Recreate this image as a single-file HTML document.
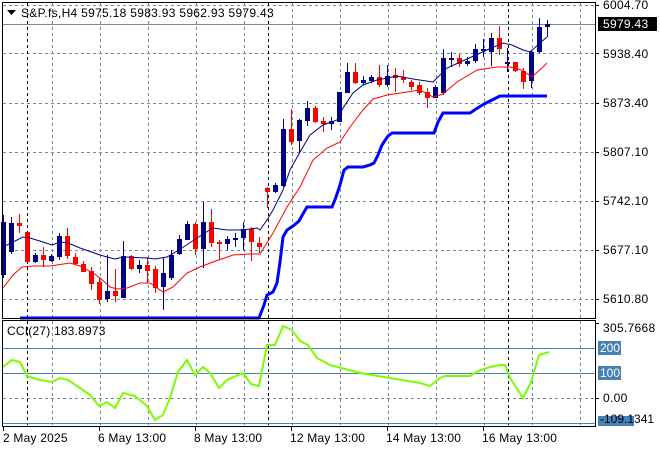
<!DOCTYPE html>
<html><head><meta charset="utf-8"><style>
html,body{margin:0;padding:0;background:#fff;}
svg{display:block;font-family:"Liberation Sans","DejaVu Sans",sans-serif;font-size:12px;}
</style></head><body>
<svg id="s" width="660" height="450" viewBox="0 0 660 450" xmlns="http://www.w3.org/2000/svg">
<rect width="660" height="450" fill="#fff"/>
<g stroke="#778899" stroke-width="1" stroke-dasharray="3,3" fill="none" shape-rendering="crispEdges">
<path d="M3 5.5H595M3 53.5H595M3 103.5H595M3 152.5H595M3 201.5H595M3 250.5H595M3 299.5H595"/>
<path d="M52.5 3V318M100.5 3V318M148.5 3V318M196.5 3V318M244.5 3V318M292.5 3V318M340.5 3V318M388.5 3V318M436.5 3V318M484.5 3V318M532.5 3V318M580.5 3V318"/>
<path d="M52.5 321V425M100.5 321V425M148.5 321V425M196.5 321V425M244.5 321V425M292.5 321V425M340.5 321V425M388.5 321V425M436.5 321V425M484.5 321V425M532.5 321V425M580.5 321V425"/>
<path d="M3 398.5H595"/>
</g>
<g stroke="#000" stroke-width="1" stroke-dasharray="3,3" fill="none" shape-rendering="crispEdges">
<path d="M27.5 3V318M268.5 3V318M508.5 3V318M27.5 321V425M268.5 321V425M508.5 321V425"/>
</g>
<g stroke="#4682b4" stroke-width="1" shape-rendering="crispEdges">
<path d="M3 348.5H595M3 373.5H595M3 423.5H595"/>
</g>
<path d="M3 24.5H595" stroke="#778899" stroke-width="1" shape-rendering="crispEdges"/>
<g id="candles" shape-rendering="crispEdges"></g>
<polyline fill="none" stroke="#000080" stroke-width="1" points="3,247 23,237 30,238 43,242 52,245 60,242 68,243 80,248 100,255 107,257 115,259 123,257 147,258 155,259 167,257 182,248 197,238 213,228 227,230 243,230 257,228 260,230 267,220 273,210 283,190 290,170 300,152 310,135 323,125 337,120 343,108 353,93 363,85 377,80 397,76 413,79 433,82 447,68 467,59 487,50 503,43 512,45 523,50 530,52 540,43 547,37"/>
<polyline fill="none" stroke="#ff0000" stroke-width="1" points="3,288 13,275 22,267 33,266 50,266 70,263 80,266 93,273 100,278 110,287 117,289 127,288 140,283 150,283 163,292 173,287 187,273 200,267 213,262 233,255 250,254 260,254 273,233 287,207 300,187 313,160 327,148 340,142 350,127 363,110 373,99 387,95 407,92 420,90 433,97 443,94 457,82 477,70 497,67 510,67 522,70 532,77 543,67 547,63"/>
<polyline fill="none" stroke="#0000ff" stroke-width="3" points="20,318 259,318 264,305 267,295 273,292 277,283 280,262 283,237 287,230 293,226 299,221 304,212 307,207 332,207 336,197 340,185 344,170 348,167 363,167 370,165 374,163 378,155 382,145 388,136 392,133 434,133 438,122 443,113 470,113 476,109 484,104 492,100 500,96 547,96"/>
<polyline fill="none" stroke="#7cfc00" stroke-width="2" points="3,367 12,360 20,362 27,376 40,380 52,382 60,378 68,380 80,388 90,395 99,406 107,402 115,408 123,393 135,396 147,406 155,420 163,415 170,398 178,372 187,360 195,375 203,367 210,373 219,388 227,380 243,373 251,384 259,386 267,345 275,345 283,326 292,330 300,341 308,345 317,358 330,365 360,373 390,378 420,383 430,386 440,378 445,376 470,376 478,371 490,367 500,365 505,365 510,378 523,398 531,382 539,355 549,352"/>
<g fill="none" stroke="#000" stroke-width="1" shape-rendering="crispEdges">
<rect x="2.5" y="2.5" width="593" height="316"/>
<rect x="2.5" y="320.5" width="593" height="106"/>
<path d="M595 5.5H599M595 53.5H599M595 103.5H599M595 152.5H599M595 201.5H599M595 250.5H599M595 299.5H599M595 323.5H599M595 398.5H599"/>
<path d="M3.5 427V431M99.5 427V431M195.5 427V431M291.5 427V431M387.5 427V431M483.5 427V431"/>
</g>
<path d="M7 10h9l-4.5 5z" fill="#000"/>
<text x="21" y="17" fill="#000" letter-spacing="0.3">S&amp;P.fs,H4  5975.18 5983.93 5962.93 5979.43</text>
<text x="7" y="335" fill="#000" letter-spacing="0.2">CCI(27) 183.8973</text>
<g fill="#000" letter-spacing="0.3">
<text x="603" y="9">6004.70</text>
<text x="603" y="58">5938.40</text>
<text x="603" y="107">5873.40</text>
<text x="603" y="156">5807.10</text>
<text x="603" y="205">5742.10</text>
<text x="603" y="254">5677.10</text>
<text x="603" y="303">5610.80</text>
<text x="603" y="332">305.7668</text>
<text x="603" y="402">0.00</text>
</g>
<rect x="598" y="17" width="59" height="14" fill="#000"/>
<text x="603" y="28" fill="#fff" letter-spacing="0.3">5979.43</text>
<rect x="598" y="341" width="23" height="14" fill="#4682b4"/>
<text x="600" y="352" fill="#fff">200</text>
<rect x="598" y="366" width="23" height="14" fill="#4682b4"/>
<text x="600" y="377" fill="#fff">100</text>
<rect x="598" y="416" width="36" height="10" fill="#4682b4"/>
<text x="600" y="423" fill="#000">-109.1341</text>
<g fill="#000" letter-spacing="0.2">
<text x="3" y="442">2 May 2025</text>
<text x="98" y="442">6 May 13:00</text>
<text x="194" y="442">8 May 13:00</text>
<text x="290" y="442">12 May 13:00</text>
<text x="386" y="442">14 May 13:00</text>
<text x="482" y="442">16 May 13:00</text>
</g>
</svg>
<script>
var d=[
['b',222,275,215,278],['b',223,252,217,254],['r',223,226,214,233],['r',232,262,232,262],['b',255,262,253,263],['r',255,260,247,267],['b',256,261,254,262],['b',236,257,233,260],['r',236,256,228,259],['r',257,264,253,265],['r',264,272,261,272],['r',271,284,267,290],['r',282,300,278,304],['b',291,299,255,302],['r',291,296,269,302],['b',256,298,241,298],['r',256,269,255,270],['b',265,269,260,273],['r',265,271,257,283],['r',269,288,266,293],['b',273,287,257,310],['b',255,278,250,280],['b',239,254,235,255],['b',224,240,221,240],['r',224,249,222,255],['b',222,249,202,268],['r',222,243,209,247],['r',242,244,240,260],['b',239,244,236,250],['b',238,239,233,247],['b',229,238,222,250],['r',229,242,227,261],['r',243,247,237,253],
['r',188,192,187,208],['b',185,192,183,193],['b',129,186,119,187],['r',129,142,109,145],['b',120,141,119,153],['b',108,121,101,126],['r',108,122,106,123],['r',121,124,117,132],['b',121,124,117,130],['b',92,122,92,122],['b',72,93,63,93],['r',72,83,63,84],['b',80,83,76,85],['b',77,81,75,83],['r',77,85,65,87],['b',76,85,65,87],['r',75,78,68,92],['r',77,80,70,83],['r',82,87,80,90],['r',85,93,82,95],['r',92,98,88,108],['b',87,98,85,98],['b',58,93,49,95],['b',58,60,52,67],['r',58,64,54,67],['b',61,64,57,66],['b',49,61,44,63],['b',49,51,39,57],['b',38,52,33,66],['r',38,49,26,55],['b',62,63,48,72],['r',62,71,62,72],['r',71,82,68,89],['b',52,81,50,88],['b',27,52,18,53],['b',24,27,20,37]];
var g=document.getElementById('candles'),h='';
d.forEach(function(c,i){var x=3+8*i,col=c[0]=='b'?'#00008b':'#ff0000';
h+='<rect x="'+x+'" y="'+c[3]+'" width="1" height="'+Math.max(1,c[4]-c[3])+'" fill="'+col+'"/>';
h+='<rect x="'+(x-2)+'" y="'+c[1]+'" width="5" height="'+Math.max(2,c[2]-c[1])+'" fill="'+col+'"/>';});
g.innerHTML=h;
</script>
</body></html>
